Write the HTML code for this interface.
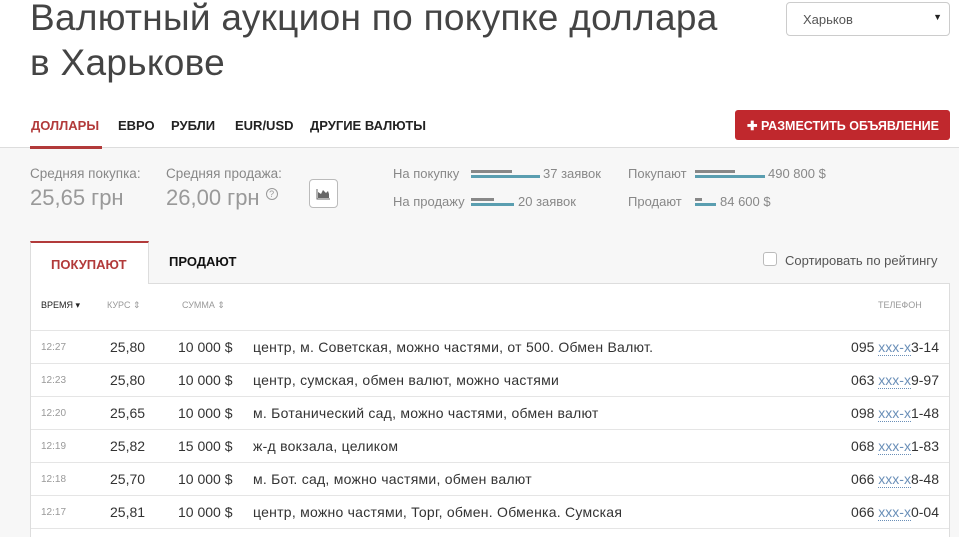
<!DOCTYPE html>
<html><head><meta charset="utf-8"><style>
*{margin:0;padding:0;box-sizing:border-box}
html,body{width:959px;height:537px;overflow:hidden}
body{background:#f7f7f7;font-family:"Liberation Sans",sans-serif;color:#333;position:relative}
.a{position:absolute;white-space:nowrap}
.top{position:absolute;left:0;top:0;width:959px;height:148px;background:#fff;border-bottom:1px solid #ddd}
h1{position:absolute;left:30px;top:-5px;font-weight:normal;font-size:37px;line-height:45px;color:#444;letter-spacing:.3px}
.sel{left:786px;top:2px;width:164px;height:34px;border:1px solid #ccc;border-radius:4px;background:#fff;font-size:13px;color:#555;padding:9px 0 0 16px}
.nav{top:118px;font-size:13px;font-weight:bold;color:#222}
.btn{left:735px;top:110px;width:215px;height:30px;background:#c0282d;border-radius:3px;color:#fff;font-size:12.5px;font-weight:bold;padding:8px 0 0 12px}
.lbl{font-size:13px;color:#888}
.big{font-size:22px;color:#999}
.bar{position:absolute;height:3px}
.g{background:#888}.b{background:#5a9eb0}
.tbl{position:absolute;left:30px;top:283px;width:920px;height:260px;background:#fff;border:1px solid #ddd}
.row{position:absolute;left:0;width:918px;height:33px;border-top:1px solid #e5e5e5;font-size:14px;color:#333}
.row span{position:absolute;top:8px}
.d{letter-spacing:.25px}
.t{font-size:10px!important;color:#999;top:11px!important;left:10px}
.ph u{color:#6a8fb8;text-decoration:none;border-bottom:1px dotted #6a8fb8}
.h{font-size:9px;color:#999;top:16px}
</style></head><body>
<div class="top"></div>
<h1>Валютный аукцион по покупке доллара<br>в Харькове</h1>
<div class="a sel">Харьков<span style="position:absolute;right:7px;top:9px;font-size:9px;color:#222">▼</span></div>
<div class="a nav" style="left:31px;color:#b23a3a">ДОЛЛАРЫ</div>
<div style="position:absolute;left:30px;top:146px;width:72px;height:3px;background:#b23a3a"></div>
<div class="a nav" style="left:118px">ЕВРО</div>
<div class="a nav" style="left:171px">РУБЛИ</div>
<div class="a nav" style="left:235px">EUR/USD</div>
<div class="a nav" style="left:310px">ДРУГИЕ ВАЛЮТЫ</div>
<div class="a btn">✚ РАЗМЕСТИТЬ ОБЪЯВЛЕНИЕ</div>

<div class="a lbl" style="left:30px;top:166px;font-size:13.5px">Средняя покупка:</div>
<div class="a big" style="left:30px;top:185px">25,65 грн</div>
<div class="a lbl" style="left:166px;top:166px;font-size:13.5px">Средняя продажа:</div>
<div class="a big" style="left:166px;top:185px">26,00 грн <span style="border:1px solid #999;border-radius:50%;display:inline-block;width:12px;height:12px;line-height:11px;text-align:center;font-size:9px;vertical-align:8px">?</span></div>
<div class="a" style="left:309px;top:179px;width:29px;height:29px;border:1px solid #bbb;border-radius:4px;background:#fff">
<svg width="27" height="27" viewBox="0 0 27 27"><path d="M8 18 L8 12 L11 14 L13 10 L16 13 L18 11 L19 14 L19 18Z" fill="#666"/><path d="M7 9V19H20" stroke="#666" fill="none" stroke-width="1"/></svg></div>

<div class="a lbl" style="left:393px;top:166px">На покупку</div>
<div class="bar g" style="left:471px;top:170px;width:41px"></div><div class="bar b" style="left:471px;top:175px;width:69px"></div>
<div class="a lbl" style="left:543px;top:166px">37 заявок</div>
<div class="a lbl" style="left:393px;top:194px">На продажу</div>
<div class="bar g" style="left:471px;top:198px;width:23px"></div><div class="bar b" style="left:471px;top:203px;width:43px"></div>
<div class="a lbl" style="left:518px;top:194px">20 заявок</div>
<div class="a lbl" style="left:628px;top:166px">Покупают</div>
<div class="bar g" style="left:695px;top:170px;width:40px"></div><div class="bar b" style="left:695px;top:175px;width:70px"></div>
<div class="a lbl" style="left:768px;top:166px">490 800 $</div>
<div class="a lbl" style="left:628px;top:194px">Продают</div>
<div class="bar g" style="left:695px;top:198px;width:7px"></div><div class="bar b" style="left:695px;top:203px;width:21px"></div>
<div class="a lbl" style="left:720px;top:194px">84 600 $</div>

<div class="a" style="left:763px;top:252px;width:14px;height:14px;border:1px solid #bbb;border-radius:3px;background:#fff"></div>
<div class="a" style="left:785px;top:253px;font-size:13px;color:#555">Сортировать по рейтингу</div>

<div class="tbl">
<span class="a h" style="left:10px;color:#222">ВРЕМЯ ▾</span>
<span class="a h" style="left:76px">КУРС ⇕</span>
<span class="a h" style="left:151px">СУММА ⇕</span>
<span class="a h" style="left:847px">ТЕЛЕФОН</span>
<div class="row" style="top:46px"><span class="t">12:27</span><span style="left:79px">25,80</span><span style="left:147px">10 000 $</span><span class="d" style="left:222px">центр, м. Советская, можно частями, от 500. Обмен Валют.</span><span class="ph" style="right:10px">095 <u>xxx-x</u>3-14</span></div>
<div class="row" style="top:79px"><span class="t">12:23</span><span style="left:79px">25,80</span><span style="left:147px">10 000 $</span><span class="d" style="left:222px">центр, сумская, обмен валют, можно частями</span><span class="ph" style="right:10px">063 <u>xxx-x</u>9-97</span></div>
<div class="row" style="top:112px"><span class="t">12:20</span><span style="left:79px">25,65</span><span style="left:147px">10 000 $</span><span class="d" style="left:222px">м. Ботанический сад, можно частями, обмен валют</span><span class="ph" style="right:10px">098 <u>xxx-x</u>1-48</span></div>
<div class="row" style="top:145px"><span class="t">12:19</span><span style="left:79px">25,82</span><span style="left:147px">15 000 $</span><span class="d" style="left:222px">ж-д вокзала, целиком</span><span class="ph" style="right:10px">068 <u>xxx-x</u>1-83</span></div>
<div class="row" style="top:178px"><span class="t">12:18</span><span style="left:79px">25,70</span><span style="left:147px">10 000 $</span><span class="d" style="left:222px">м. Бот. сад, можно частями, обмен валют</span><span class="ph" style="right:10px">066 <u>xxx-x</u>8-48</span></div>
<div class="row" style="top:211px"><span class="t">12:17</span><span style="left:79px">25,81</span><span style="left:147px">10 000 $</span><span class="d" style="left:222px">центр, можно частями, Торг, обмен. Обменка. Сумская</span><span class="ph" style="right:10px">066 <u>xxx-x</u>0-04</span></div>
<div class="row" style="top:244px"></div>
</div>
<div class="a" style="left:30px;top:241px;width:119px;height:43px;background:#fff;border:1px solid #ddd;border-bottom:none;border-top:2px solid #b23a3a;font-size:13px;font-weight:bold;color:#b23a3a;padding:14px 0 0 20px">ПОКУПАЮТ</div>
<div class="a" style="left:169px;top:254px;font-size:13px;font-weight:bold;color:#111">ПРОДАЮТ</div>
</body></html>
